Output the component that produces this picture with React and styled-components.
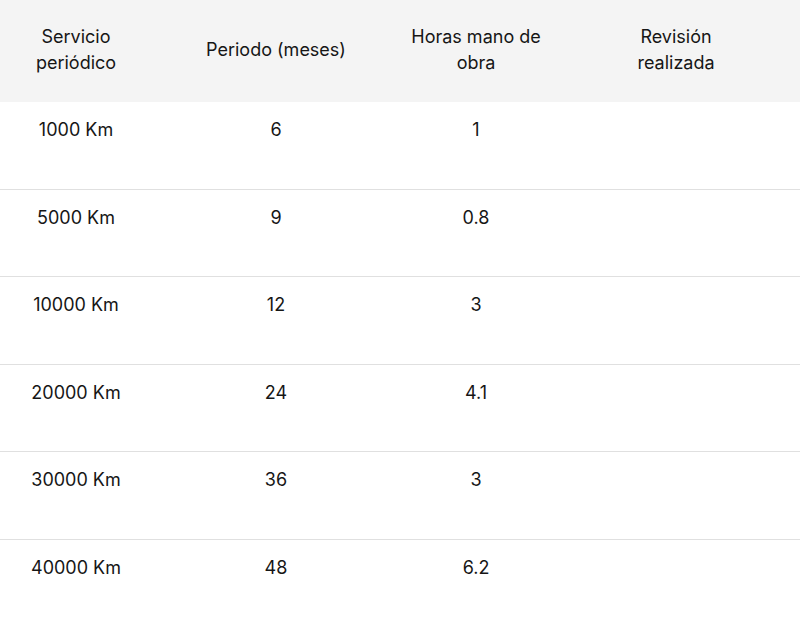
import React from "react";
import styled, { createGlobalStyle } from "styled-components";

const Global = createGlobalStyle`
  html, body { margin: 0; padding: 0; background: #ffffff; }
  body { font-family: Inter, "Noto Sans", sans-serif; color: #161616; }
`;

const Table = styled.table`
  width: 800px;
  border-collapse: collapse;
  table-layout: fixed;
  font-size: 18px;
  line-height: 25.5px;
`;

const HeadRow = styled.tr`
  background: #f4f4f4;
`;

const Th = styled.th`
  width: 200px;
  font-weight: 400;
  text-align: center;
  vertical-align: middle;
  padding: 24px 50px 27px 2px;
  box-sizing: border-box;
`;

const Row = styled.tr`
  border-bottom: ${(p) => (p.$last ? "none" : "1px solid #e0e0e0")};
`;

const Td = styled.td`
  text-align: center;
  vertical-align: top;
  padding: 15px 50px 46px 2px;
  box-sizing: border-box;
`;

const headers = ["Servicio periódico", "Periodo (meses)", "Horas mano de obra", "Revisión realizada"];
const rows = [
  ["1000 Km", "6", "1", ""],
  ["5000 Km", "9", "0.8", ""],
  ["10000 Km", "12", "3", ""],
  ["20000 Km", "24", "4.1", ""],
  ["30000 Km", "36", "3", ""],
  ["40000 Km", "48", "6.2", ""],
];

export default function App() {
  return (
    <>
      <Global />
      <Table>
        <thead>
          <HeadRow>
            {headers.map((h) => (
              <Th key={h}>{h}</Th>
            ))}
          </HeadRow>
        </thead>
        <tbody>
          {rows.map((r, i) => (
            <Row key={i} $last={i === rows.length - 1}>
              {r.map((c, j) => (
                <Td key={j}>{c}</Td>
              ))}
            </Row>
          ))}
        </tbody>
      </Table>
    </>
  );
}
